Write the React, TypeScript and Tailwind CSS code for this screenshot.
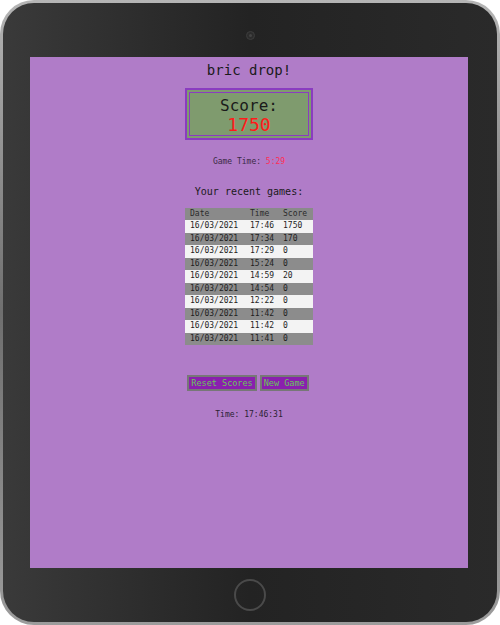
export default function App() {
  const games = [
    { date: "16/03/2021", time: "17:46", score: "1750" },
    { date: "16/03/2021", time: "17:34", score: "170" },
    { date: "16/03/2021", time: "17:29", score: "0" },
    { date: "16/03/2021", time: "15:24", score: "0" },
    { date: "16/03/2021", time: "14:59", score: "20" },
    { date: "16/03/2021", time: "14:54", score: "0" },
    { date: "16/03/2021", time: "12:22", score: "0" },
    { date: "16/03/2021", time: "11:42", score: "0" },
    { date: "16/03/2021", time: "11:42", score: "0" },
    { date: "16/03/2021", time: "11:41", score: "0" },
  ];

  return (
    <div className="w-[500px] h-[625px] bg-white font-['DejaVu_Sans_Mono',monospace]">
      {/* tablet frame */}
      <div className="h-full rounded-[34px] bg-gradient-to-b from-[#b5b5b5] via-[#6f6f6f] to-[#9c9c9c] p-[3px]">
        <div className="h-full rounded-[31px] bg-gradient-to-r from-[#3a3a3a] via-[#232323] to-[#2a2a2a] flex flex-col">
          {/* top bezel */}
          <div className="h-[54px] flex justify-center pt-[28px]">
            <div className="w-[9px] h-[9px] rounded-full bg-[#2c2c2c] border border-[#3d3d3d] flex items-center justify-center">
              <div className="w-[3px] h-[3px] rounded-full bg-[#444]"></div>
            </div>
          </div>

          {/* screen */}
          <div className="h-[511px] ml-[27px] mr-[29px] bg-[#b07cc8] flex flex-col items-center text-[#1a1a1a]">
            <h1 className="mt-[3px] text-[14px] leading-[20px]">bric drop!</h1>

            <div className="mt-[8px] w-[128px] h-[52px] border-2 border-[#8a3cc0] bg-[#7f9b6e] p-[2px]">
              <div className="h-full border border-[#8a3cc0] flex flex-col items-center pt-[4px]">
                <div className="text-[16px] leading-[18px]">Score:</div>
                <div className="text-[18px] leading-[20px] text-[#ff1a1a]">1750</div>
              </div>
            </div>

            <p className="mt-[17px] text-[8px] leading-[10px] text-[#3a2a45]">
              Game Time: <span className="text-[#ff2d55]">5:29</span>
            </p>

            <h2 className="mt-[19px] text-[10px] leading-[12px]">Your recent games:</h2>

            <div className="mt-[10px] w-[128px] text-[8px]">
              <div className="grid grid-cols-[60px_33px_35px] h-[12px] items-center bg-[#8a8a8a] text-[#2a2a2a]">
                <span className="pl-[5px]">Date</span>
                <span className="pl-[5px]">Time</span>
                <span className="pl-[5px]">Score</span>
              </div>
              {games.map((g, i) => (
                <div
                  key={i}
                  className={`grid grid-cols-[60px_33px_35px] h-[12.5px] items-center text-[#1e1e1e] ${
                    i % 2 === 0 ? "bg-[#f3f3f3]" : "bg-[#8c8c8c]"
                  }`}
                >
                  <span className="pl-[5px]">{g.date}</span>
                  <span className="pl-[5px]">{g.time}</span>
                  <span className="pl-[5px]">{g.score}</span>
                </div>
              ))}
            </div>

            <div className="mt-[30px] mr-[2px] flex gap-[3px]">
              <button className="h-[16px] px-[2px] bg-[#8a1fae] border-2 border-[#777] text-[#6bc45a] text-[8.5px] leading-none">
                Reset Scores
              </button>
              <button className="h-[16px] px-[2px] bg-[#8a1fae] border-2 border-[#777] text-[#6bc45a] text-[8.5px] leading-none">
                New Game
              </button>
            </div>

            <p className="mt-[19px] text-[8px] leading-[10px] text-[#2a2233]">Time: 17:46:31</p>
          </div>

          {/* bottom bezel */}
          <div className="flex-1 flex justify-center pt-[11px]">
            <div className="w-[32px] h-[32px] rounded-full border-2 border-[#4a4a4a]"></div>
          </div>
        </div>
      </div>
    </div>
  );
}
